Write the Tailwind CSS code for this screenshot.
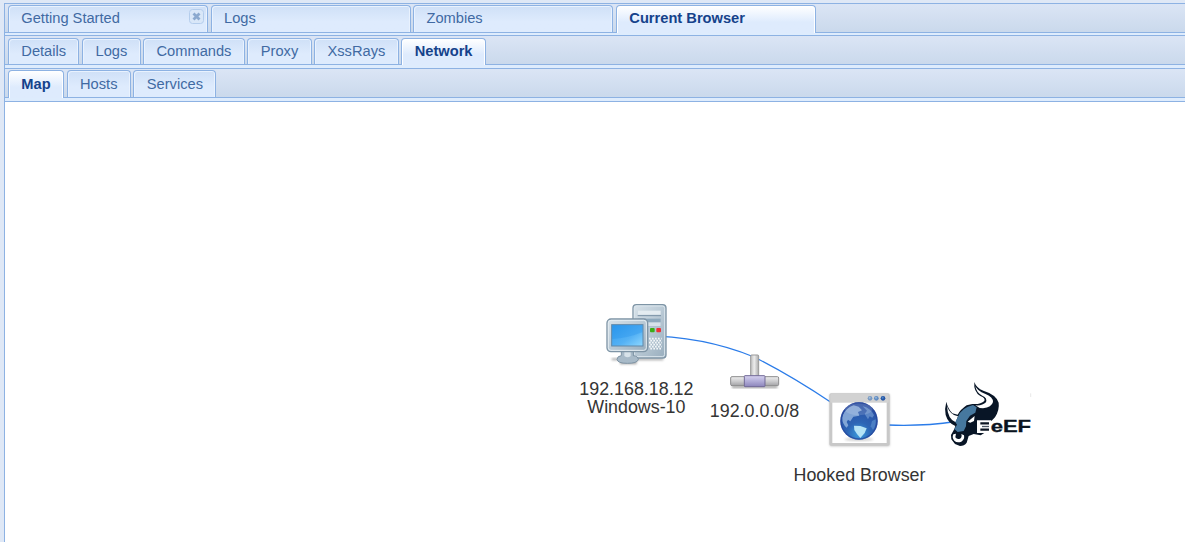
<!DOCTYPE html>
<html lang="en">
<head>
<meta charset="utf-8">
<title>Network map</title>
<script src="https://cdn.jsdelivr.net/npm/@tailwindcss/browser@4"></script>
</head>
<body class="h-[542px] w-[1185px] overflow-hidden bg-[#dfe8f6] pl-1 pt-[3px] font-['Liberation_Sans',sans-serif] text-[14.667px] leading-[18px] text-[#416aa3]">
<main class="flex h-[539px] flex-col border-l border-t border-[#8db2e3]">

  <nav class="flex h-[29px] shrink-0 items-end border-b border-[#8db2e3] bg-linear-to-b from-[#dbe5f5] to-[#cad9ec] pl-[3px]">
    <div class="mr-[3px] flex h-[27px] w-[200px] justify-between rounded-t-[4px] border border-b-0 border-[#8db2e3] bg-linear-to-b from-[#cfe0f7] to-[#deebfd] to-60% pl-[12.3px] pr-[3px] pt-[3px] shadow-[inset_1px_1px_0_#e9f2fe,inset_-1px_0_0_#e9f2fe]">
      <span>Getting Started</span>
      <svg class="size-[15px]" viewBox="0 0 15 15"><rect x=".5" y=".5" width="14" height="14" rx="3" fill="#d9e7f8" stroke="#b4cdec"/><path d="M4.500 4.500l6 6m0-6l-6 6" stroke="#8ba9cf" stroke-width="2.8"/></svg>
    </div>
    <div class="mr-[2px] h-[27px] w-[200px] rounded-t-[4px] border border-b-0 border-[#8db2e3] bg-linear-to-b from-[#cfe0f7] to-[#deebfd] to-60% pl-3 pt-[3px] shadow-[inset_1px_1px_0_#e9f2fe,inset_-1px_0_0_#e9f2fe]">Logs</div>
    <div class="mr-[3px] h-[27px] w-[200px] rounded-t-[4px] border border-b-0 border-[#8db2e3] bg-linear-to-b from-[#cfe0f7] to-[#deebfd] to-60% pl-[12.5px] pt-[3px] shadow-[inset_1px_1px_0_#e9f2fe,inset_-1px_0_0_#e9f2fe]">Zombies</div>
    <div class="-mb-px h-7 w-[200px] rounded-t-[4px] border border-b-0 border-[#8db2e3] bg-linear-to-b from-white to-[#deebfd] to-60% pl-[12.3px] pt-[3px] font-bold text-[#15428b] shadow-[inset_1px_1px_0_white,inset_-1px_0_0_white]">Current Browser</div>
  </nav>
  <div class="h-[3px] shrink-0 border-b border-[#8db2e3] bg-[#deecfd]"></div>

  <nav class="flex h-[29px] shrink-0 items-end border-b border-[#8db2e3] bg-linear-to-b from-[#dbe5f5] to-[#cad9ec] pl-[3px]">
    <div class="mr-[3px] h-[26px] w-[71px] rounded-t-[4px] border border-b-0 border-[#8db2e3] bg-linear-to-b from-[#cfe0f7] to-[#deebfd] to-60% pl-[12.3px] pt-[3px] shadow-[inset_1px_1px_0_#e9f2fe,inset_-1px_0_0_#e9f2fe]">Details</div>
    <div class="mr-[2px] h-[26px] w-[59px] rounded-t-[4px] border border-b-0 border-[#8db2e3] bg-linear-to-b from-[#cfe0f7] to-[#deebfd] to-60% pl-[12.5px] pt-[3px] shadow-[inset_1px_1px_0_#e9f2fe,inset_-1px_0_0_#e9f2fe]">Logs</div>
    <div class="mr-[2px] h-[26px] w-[102px] rounded-t-[4px] border border-b-0 border-[#8db2e3] bg-linear-to-b from-[#cfe0f7] to-[#deebfd] to-60% pl-[12.5px] pt-[3px] shadow-[inset_1px_1px_0_#e9f2fe,inset_-1px_0_0_#e9f2fe]">Commands</div>
    <div class="mr-[2px] h-[26px] w-[65px] rounded-t-[4px] border border-b-0 border-[#8db2e3] bg-linear-to-b from-[#cfe0f7] to-[#deebfd] to-60% pl-[12.8px] pt-[3px] shadow-[inset_1px_1px_0_#e9f2fe,inset_-1px_0_0_#e9f2fe]">Proxy</div>
    <div class="mr-[2px] h-[26px] w-[85px] rounded-t-[4px] border border-b-0 border-[#8db2e3] bg-linear-to-b from-[#cfe0f7] to-[#deebfd] to-60% pl-[12.5px] pt-[3px] shadow-[inset_1px_1px_0_#e9f2fe,inset_-1px_0_0_#e9f2fe]">XssRays</div>
    <div class="-mb-px h-[27px] w-[85px] rounded-t-[4px] border border-b-0 border-[#8db2e3] bg-linear-to-b from-white to-[#deebfd] to-60% pl-[12.7px] pt-[3px] font-bold text-[#15428b] shadow-[inset_1px_1px_0_white,inset_-1px_0_0_white]">Network</div>
  </nav>
  <div class="h-1 shrink-0 border-b border-[#8db2e3] bg-[#deecfd]"></div>

  <nav class="flex h-[29px] shrink-0 items-end border-b border-[#8db2e3] bg-linear-to-b from-[#dbe5f5] to-[#cad9ec] pl-[3px]">
    <div class="-mb-px mr-[3px] h-7 w-14 rounded-t-[4px] border border-b-0 border-[#8db2e3] bg-linear-to-b from-white to-[#deebfd] to-60% pl-[12.3px] pt-1 font-bold text-[#15428b] shadow-[inset_1px_1px_0_white,inset_-1px_0_0_white]">Map</div>
    <div class="mr-[2px] h-[27px] w-16 rounded-t-[4px] border border-b-0 border-[#8db2e3] bg-linear-to-b from-[#cfe0f7] to-[#deebfd] to-60% pl-3 pt-1 shadow-[inset_1px_1px_0_#e9f2fe,inset_-1px_0_0_#e9f2fe]">Hosts</div>
    <div class="h-[27px] w-[83px] rounded-t-[4px] border border-b-0 border-[#8db2e3] bg-linear-to-b from-[#cfe0f7] to-[#deebfd] to-60% pl-[12.8px] pt-1 shadow-[inset_1px_1px_0_#e9f2fe,inset_-1px_0_0_#e9f2fe]">Services</div>
  </nav>
  <div class="h-1 shrink-0 border-b border-[#8db2e3] bg-[#deecfd]"></div>

  <svg class="h-[440px] w-[1180px] shrink-0 bg-white" viewBox="5 102 1180 440">
    <defs>
      <linearGradient id="metal" x2="1" y2="1"><stop stop-color="#d9e3ea"/><stop offset=".5" stop-color="#b9c9d5"/><stop offset="1" stop-color="#98adbd"/></linearGradient>
      <linearGradient id="screen" x2="1" y2="1"><stop stop-color="#2f9bee"/><stop offset=".6" stop-color="#55b2f5"/><stop offset="1" stop-color="#8fd8ff"/></linearGradient>
      <linearGradient id="pipeH" x2="0" y2="1"><stop stop-color="#eee"/><stop offset=".5" stop-color="#cdcdcf"/><stop offset="1" stop-color="#a3a3a6"/></linearGradient>
      <linearGradient id="pipeV"><stop stop-color="#bbb"/><stop offset=".45" stop-color="#ececec"/><stop offset="1" stop-color="#aaa"/></linearGradient>
      <linearGradient id="hub" x2="0" y2="1"><stop stop-color="#d6d2ef"/><stop offset=".45" stop-color="#b5b0da"/><stop offset="1" stop-color="#8c85bb"/></linearGradient>
      <radialGradient id="globe" cx=".5" cy=".85" r=".8"><stop stop-color="#3b9bdc"/><stop offset=".4" stop-color="#2d65b5"/><stop offset="1" stop-color="#2a4ea2"/></radialGradient>
      <filter id="soft" x="-20%" y="-20%" width="140%" height="150%"><feGaussianBlur stdDeviation="3"/></filter>
      <filter id="land" x="-10%" y="-10%" width="120%" height="120%"><feGaussianBlur stdDeviation="2.2"/></filter>
    </defs>

    <g fill="none" stroke="#2b7ce9" stroke-width="1.3">
      <path d="M637 336Q700 335 754 357"/>
      <path d="M754 357Q790 375 832 403"/>
      <path d="M888 425Q922 426.5 956 421.5"/>
    </g>

    <!-- Host computer -->
    <g transform="translate(595 295) scale(.33333)">
      <path d="M50 190H205V196H125V208H75V196H50Z" fill="#555" opacity=".5" filter="url(#soft)"/>
      <rect x="114" y="29" width="99" height="160" rx="10" fill="url(#metal)" stroke="#7e94a5" stroke-width="4"/>
      <rect x="118" y="33" width="91" height="152" rx="7" fill="none" stroke="#dce6ed" stroke-width="3"/>
      <rect x="129" y="47" width="68" height="12" fill="#e4ecf1"/><path d="M128 62H198" stroke="#7891a5" stroke-width="3"/>
      <rect x="129" y="71" width="68" height="24" fill="#8ea9bd"/><rect x="132" y="82" width="65" height="12" fill="#d7e2ea"/>
      <rect x="165" y="99" width="14" height="13" rx="3" fill="#3cac18"/><rect x="184" y="99" width="14" height="13" rx="3" fill="#ee3036"/>
      <path d="M162 131H200M166 137H200M162 143H200M166 149H200M162 155H200M166 161H200" stroke="#f2f6f8" stroke-width="5" stroke-dasharray="5 4"/>
      <path d="M79 166H115V182Q129 183 130 194Q126 205 97 205T66 193Q67 183 79 182Z" fill="#a8bac8" stroke="#7e94a5" stroke-width="3"/>
      <path d="M88 169V183Q98 190 107 183V169" fill="#d8e3ea"/>
      <rect x="36" y="72" width="122" height="98" rx="12" fill="url(#metal)" stroke="#7e94a5" stroke-width="4"/>
      <rect x="40" y="76" width="114" height="90" rx="8" fill="none" stroke="#e5edf2" stroke-width="3"/>
      <rect x="50" y="89" width="94" height="64" fill="url(#screen)" stroke="#6088a8" stroke-width="3"/>
      <path d="M52 132Q95 130 142 112V91H52Z" fill="#1789e6" opacity=".25"/>
    </g>

    <!-- Subnet -->
    <g transform="translate(720 345) scale(.33333)">
      <path d="M36 123H172V129H36Z" fill="#333" opacity=".5" filter="url(#soft)"/>
      <rect x="92" y="30" width="24" height="66" rx="3" fill="url(#pipeV)" stroke="#999" stroke-width="3"/>
      <rect x="32" y="95" width="144" height="27" rx="4" fill="url(#pipeH)" stroke="#8c8c8e" stroke-width="3"/>
      <rect x="73" y="92" width="62" height="33" rx="2" fill="url(#hub)" stroke="#716998" stroke-width="3"/>
    </g>

    <!-- Browser window -->
    <g transform="translate(820 385) scale(.33333)">
      <rect x="29" y="28" width="180" height="156" rx="4" fill="#777" opacity=".45" filter="url(#soft)"/>
      <rect x="28" y="25" width="181" height="157" rx="5" fill="#c8c8c8"/>
      <rect x="31" y="27" width="175" height="26" rx="3" fill="#d2d2d2"/>
      <rect x="37" y="53" width="163" height="121" fill="#fff"/>
      <circle cx="150" cy="40" r="7" fill="#7798c2"/><circle cx="169" cy="40" r="7" fill="#628cc1"/><circle cx="189" cy="40" r="7" fill="#2555a4"/>
      <circle cx="149" cy="38" r="3" fill="#a1bfdc"/><circle cx="168" cy="38" r="3" fill="#8eb5dc"/><circle cx="188" cy="38" r="3" fill="#5088c8"/>
      <ellipse cx="117" cy="163" rx="43" ry="5" fill="#777" opacity=".35" filter="url(#soft)"/>
      <circle cx="117" cy="108" r="56" fill="url(#globe)"/>
      <g filter="url(#land)">
        <path d="M69 90Q78 69 101 61L116 65 126 76 114 81 118 92 100 95 91 109 84 104 80 111 85 121 80 128Q66 116 67 98Z" fill="#9dbde3" opacity=".75"/>
        <path d="M102 122L121 123 140 130 134 144 121 159 111 147 103 135Z" fill="#b5e3f6"/>
        <path d="M128 64Q151 68 162 91L157 98 149 94 144 103 134 87 141 77Z" fill="#6f98d2" opacity=".7"/>
        <path d="M156 108L167 103Q169 122 159 135L152 124Z" fill="#4b7fc4"/>
      </g>
      <circle cx="117" cy="108" r="54" fill="none" stroke="#26449a" stroke-width="4" opacity=".7"/>
      <ellipse cx="116" cy="73" rx="41" ry="18" fill="#fff" opacity=".15"/>
    </g>

    <!-- BeEF logo -->
    <g transform="translate(935 375) scale(.33333)">
      <path d="M118 21Q124 39 145 47Q184 59 191 83Q194 104 180 127L170 137H126V173H149L137 181 116 177 101 183 95 203Q88 213 75 213L60 207 49 193 48 180 58 162 61 153Q39 144 32 120Q28 101 34 80Q38 99 52 115L68 119Q76 104 95 91L112 87Q137 89 148 78Q152 69 136 63Q115 50 118 21Z" fill="#081526"/>
      <path d="M121 33Q127 48 150 56Q175 66 174 81Q170 97 144 100Q131 100 121 91Q142 93 153 82Q158 69 142 62Q124 53 121 33Z" fill="#fff"/>
      <path d="M36 92Q42 112 57 120L69 124 62 142Q38 132 36 92Z" fill="#fff"/>
      <path d="M69 125Q80 98 114 90L125 97 121 113 105 122 94 138 93 154 86 168 68 171 58 162 66 149 61 141Z" fill="#46789f"/>
      <path d="M98 140L119 123 117 138 106 143Z" fill="#fff"/>
      <path d="M55 178Q50 188 58 197Q66 205 79 200Q90 193 87 181L79 177Q82 187 75 191Q66 195 61 187L63 176Z" fill="#fff"/>
      <rect x="126" y="136" width="42" height="38" fill="#fff"/>
      <path d="M136 145H162M136 164H162" stroke="#0a1320" stroke-width="7"/>
      <path d="M141 154.500H162" stroke="#4c5664" stroke-width="4"/>
      <text x="167" y="171.500" textLength="121" lengthAdjust="spacingAndGlyphs" font-family="Liberation Sans, sans-serif" font-size="49" font-weight="700" fill="#0a1320" stroke="#0a1320" stroke-width="1">eEF</text>
      <path d="M287 55V66" stroke="#ddd" stroke-width="2"/>
    </g>

    <g fill="#343434" font-family="Liberation Sans, sans-serif" font-size="17.850" text-anchor="middle">
      <text x="636.4" y="395">192.168.18.12</text>
      <text x="636.4" y="413">Windows-10</text>
      <text x="754.5" y="417">192.0.0.0/8</text>
      <text x="859.5" y="481">Hooked Browser</text>
    </g>
  </svg>
</main>
</body>
</html>
